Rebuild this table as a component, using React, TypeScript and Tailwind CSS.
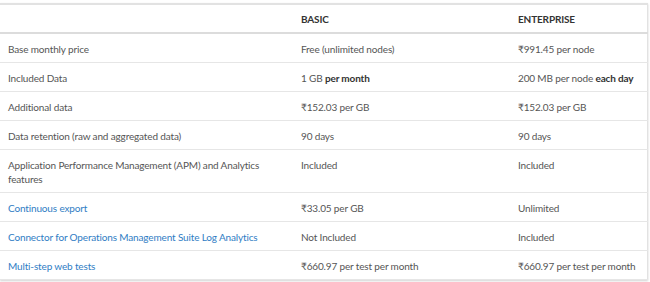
import { ReactNode } from "react";

type Row = {
  label: string;
  link?: boolean;
  basic: ReactNode;
  enterprise: ReactNode;
  tall?: boolean;
};

const rows: Row[] = [
  { label: "Base monthly price", basic: "Free (unlimited nodes)", enterprise: "₹991.45 per node" },
  {
    label: "Included Data",
    basic: (
      <>
        1 GB <b className="font-bold text-[#333]">per month</b>
      </>
    ),
    enterprise: (
      <>
        200 MB per node <b className="font-bold text-[#333]">each day</b>
      </>
    ),
  },
  { label: "Additional data", basic: "₹152.03 per GB", enterprise: "₹152.03 per GB" },
  { label: "Data retention (raw and aggregated data)", basic: "90 days", enterprise: "90 days" },
  {
    label: "Application Performance Management (APM) and Analytics features",
    basic: "Included",
    enterprise: "Included",
    tall: true,
  },
  { label: "Continuous export", link: true, basic: "₹33.05 per GB", enterprise: "Unlimited" },
  {
    label: "Connector for Operations Management Suite Log Analytics",
    link: true,
    basic: "Not Included",
    enterprise: "Included",
  },
  {
    label: "Multi-step web tests",
    link: true,
    basic: "₹660.97 per test per month",
    enterprise: "₹660.97 per test per month",
  },
];

export default function App() {
  return (
    <div
      className="w-[650px] h-[282px] bg-white pt-[3px] overflow-hidden"
      style={{ fontFamily: 'Lato, "Open Sans", sans-serif' }}
    >
      <table className="w-[648px] table-fixed border-collapse border-t-2 border-r border-[#e2e2e2] shadow-[0_1px_2px_rgba(0,0,0,0.18)] text-[10px] tracking-[-0.15px] leading-[14px] text-[#555]">
        <thead>
          <tr className="h-[29px] border-b-2 border-[#dcdcdc]">
            <th className="w-[293px] px-2" />
            <th className="w-[217px] px-2 text-left font-bold text-[#333]">BASIC</th>
            <th className="px-2 text-left font-bold text-[#333]">ENTERPRISE</th>
          </tr>
        </thead>
        <tbody>
          {rows.map((r) => (
            <tr
              key={r.label}
              className={`border-b border-[#e6e6e6] align-top ${r.tall ? "h-[43px]" : "h-[29px]"}`}
            >
              <td className={`pl-2 pr-[25px] pt-[8px] ${r.link ? "text-[#2f7dc4]" : ""}`}>{r.label}</td>
              <td className="px-2 pt-[8px] whitespace-nowrap">{r.basic}</td>
              <td className="px-2 pt-[8px] whitespace-nowrap">{r.enterprise}</td>
            </tr>
          ))}
        </tbody>
      </table>
    </div>
  );
}
